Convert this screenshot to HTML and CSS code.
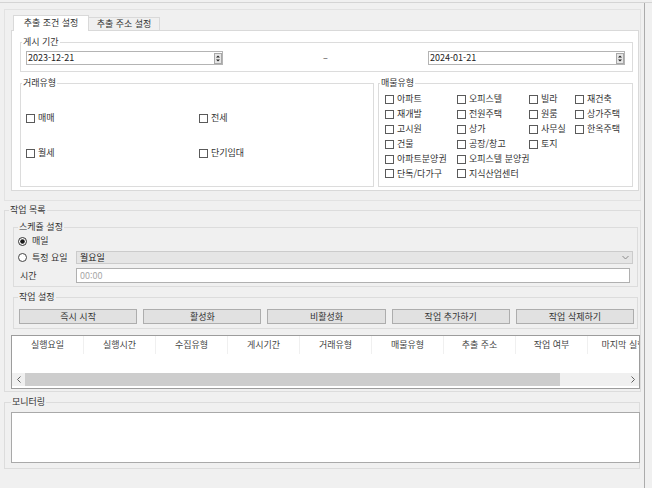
FILE: index.html
```html
<!DOCTYPE html>
<html lang="ko">
<head>
<meta charset="utf-8">
<title>작업 설정</title>
<link rel="stylesheet" href="styles.css">
</head>
<body>
<div class="app">
  <div class="main">
    <div class="tabhost">
      <div class="tabs">
        <div class="tab active">추출 조건 설정</div>
        <div class="tab">추출 주소 설정</div>
      </div>
      <div class="tabpage">
        <fieldset class="grp period">
          <legend>게시 기간</legend>
          <div class="daterow">
            <div class="datepick"><span>2023-12-21</span><svg class="spin" width="8" height="11" viewBox="0 0 8 11"><rect x="0.5" y="0.5" width="7" height="10" fill="#e6e6e6" stroke="#a8a8a8"/><path d="M2 4.6h4L4 2.4z M2 6.4h4L4 8.6z" fill="#222"/></svg></div>
            <span class="dash">–</span>
            <div class="datepick"><span>2024-01-21</span><svg class="spin" width="8" height="11" viewBox="0 0 8 11"><rect x="0.5" y="0.5" width="7" height="10" fill="#e6e6e6" stroke="#a8a8a8"/><path d="M2 4.6h4L4 2.4z M2 6.4h4L4 8.6z" fill="#222"/></svg></div>
          </div>
        </fieldset>
        <div class="typerow">
          <fieldset class="grp deal">
            <legend>거래유형</legend>
            <div class="dealgrid">
              <label class="chk"><span class="box"></span>매매</label>
              <label class="chk"><span class="box"></span>전세</label>
              <label class="chk"><span class="box"></span>월세</label>
              <label class="chk"><span class="box"></span>단기임대</label>
            </div>
          </fieldset>
          <fieldset class="grp prop">
            <legend>매물유형</legend>
            <div class="propgrid">
              <label class="chk"><span class="box"></span>아파트</label>
              <label class="chk"><span class="box"></span>오피스텔</label>
              <label class="chk"><span class="box"></span>빌라</label>
              <label class="chk"><span class="box"></span>재건축</label>
              <label class="chk"><span class="box"></span>재개발</label>
              <label class="chk"><span class="box"></span>전원주택</label>
              <label class="chk"><span class="box"></span>원룸</label>
              <label class="chk"><span class="box"></span>상가주택</label>
              <label class="chk"><span class="box"></span>고시원</label>
              <label class="chk"><span class="box"></span>상가</label>
              <label class="chk"><span class="box"></span>사무실</label>
              <label class="chk"><span class="box"></span>한옥주택</label>
              <label class="chk"><span class="box"></span>건물</label>
              <label class="chk"><span class="box"></span>공장/창고</label>
              <label class="chk"><span class="box"></span>토지</label>
              <span></span>
              <label class="chk"><span class="box"></span>아파트분양권</label>
              <label class="chk span3"><span class="box"></span>오피스텔 분양권</label>
              <label class="chk"><span class="box"></span>단독/다가구</label>
              <label class="chk span3"><span class="box"></span>지식산업센터</label>
            </div>
          </fieldset>
        </div>
      </div>
    </div>

    <fieldset class="grp jobs">
      <legend>작업 목록</legend>
      <fieldset class="grp sched">
        <legend>스케쥴 설정</legend>
        <div class="schedgrid">
          <label class="radio full"><svg width="9" height="9" viewBox="0 0 9 9"><circle cx="4.5" cy="4.5" r="4" fill="#fff" stroke="#333"/><circle cx="4.5" cy="4.5" r="2.3" fill="#1a1a1a"/></svg>매일</label>
          <label class="radio"><svg width="9" height="9" viewBox="0 0 9 9"><circle cx="4.5" cy="4.5" r="4" fill="#fff" stroke="#444"/></svg>특정 요일</label>
          <div class="combo"><span>월요일</span><svg width="7" height="5" viewBox="0 0 7 5"><path d="M0.5 1l3 3 3-3" fill="none" stroke="#8a8a8a"/></svg></div>
          <span class="lbl">시간</span>
          <div class="textbox"><span class="ph">00:00</span></div>
        </div>
      </fieldset>
      <fieldset class="grp jobset">
        <legend>작업 설정</legend>
        <div class="btnrow">
          <button class="btn">즉시 시작</button>
          <button class="btn">활성화</button>
          <button class="btn">비활성화</button>
          <button class="btn">작업 추가하기</button>
          <button class="btn">작업 삭제하기</button>
        </div>
      </fieldset>
      <div class="list">
        <div class="lhead">
          <span class="col">실행요일</span>
          <span class="col">실행시간</span>
          <span class="col">수집유형</span>
          <span class="col">게시기간</span>
          <span class="col">거래유형</span>
          <span class="col">매물유형</span>
          <span class="col">추출 주소</span>
          <span class="col">작업 여부</span>
          <span class="col">마지막 실행</span>
        </div>
        <div class="lbody"></div>
        <div class="hscroll">
          <span class="arrow"><svg width="4" height="7" viewBox="0 0 4 7"><path d="M3.5 0.5l-3 3 3 3" fill="none" stroke="#606060"/></svg></span>
          <span class="track"><span class="thumb"></span></span>
          <span class="arrow"><svg width="4" height="7" viewBox="0 0 4 7"><path d="M0.5 0.5l3 3-3 3" fill="none" stroke="#606060"/></svg></span>
        </div>
      </div>
    </fieldset>

    <fieldset class="grp monitor">
      <legend>모니터링</legend>
      <div class="monbox"></div>
    </fieldset>
  </div>
  <div class="side"></div>
</div>
</body>
</html>
```
FILE: styles.css
```css
* { box-sizing: border-box; }
html, body { margin: 0; padding: 0; }
body {
  background: #f0f0f0;
  font-family: "Noto Sans CJK KR", "Noto Sans", sans-serif;
  font-size: 9px;
  line-height: 12px;
  color: #333;
  width: 652px;
  height: 488px;
  overflow: hidden;
}
.app {
  margin-top: 2px;
  border-top: 1px solid #d4d4d4;
  display: flex;
  height: 486px;
}
.main {
  width: 645px;
  flex: none;
  border-right: 1px solid #ababab;
}
.side { flex: 1; }

/* tab control */
.tabhost {
  margin: 6px 3px 0 4px;
  height: 192px;
  border: 1px solid #e2e2e2;
  padding: 5px 1px 0 6px;
}
.tabs {
  display: flex;
  align-items: flex-end;
  height: 15px;
  margin-left: 2px;
  position: relative;
  z-index: 1;
}
.tab {
  height: 13px;
  width: 72px;
  margin-left: -1px;
  border: 1px solid #d9d9d9;
  border-bottom: none;
  background: #f0f0f0;
  text-align: center;
  line-height: 11px;
  white-space: nowrap;
}
.tab.active {
  width: 76px;
  height: 16px;
  margin-left: 0;
  margin-bottom: -1px;
  padding-top: 1px;
  line-height: 12px;
  background: #fff;
}
.tabpage {
  background: #fff;
  border: 1px solid #d9d9d9;
  height: 161px;
  padding: 1px 5px 0 8px;
}

/* group boxes */
.grp {
  margin: 0;
  padding: 0;
  min-width: 0;
  border: 1px solid #dcdcdc;
}
.grp > legend {
  padding: 0 1px;
  margin-left: 1px;
  line-height: 12px;
  white-space: nowrap;
}

/* period */
.period { margin-top: 4px; }
.daterow {
  display: flex;
  justify-content: space-between;
  align-items: center;
  padding: 3px 7px 6px 5px;
}
.datepick {
  width: 197px;
  height: 14px;
  border: 1px solid #b4b4b4;
  background: #fff;
  display: flex;
  align-items: center;
  justify-content: space-between;
  padding-left: 1px;
  color: #222;
}
.spin { display: block; }
.dash { color: #444; }

/* type groups */
.typerow {
  display: flex;
  gap: 4px;
  margin-top: 5px;
}
.deal { width: 354px; height: 110px; flex: none; }
.prop { flex: 1; height: 110px; }
.dealgrid {
  display: grid;
  grid-template-columns: 173px 1fr;
  row-gap: 23px;
  padding: 23px 0 0 5px;
}
.propgrid {
  display: grid;
  grid-template-columns: 72px 72px 46px 1fr;
  grid-auto-rows: 14.9px;
  padding: 3px 0 0 6px;
}
.chk {
  display: flex;
  align-items: center;
  gap: 3px;
  height: 12px;
  white-space: nowrap;
}
.propgrid .chk { align-self: center; }
.span3 { grid-column: span 3; }
.box {
  width: 9px;
  height: 9px;
  border: 1px solid #5a5a5a;
  background: #fff;
  flex: none;
}

/* jobs */
.jobs { margin: 3px 3px 0 4px; }
.jobs > legend { margin-left: 4px; }
.sched { margin: 5px 2px 0 8px; }
.sched > legend, .jobset > legend { margin-left: 4px; }
.schedgrid {
  display: grid;
  grid-template-columns: 58px 1fr;
  grid-template-rows: 12px 13px 15px;
  row-gap: 4px;
  align-items: center;
  padding: 2px 0 3px 4px;
}
.radio {
  display: flex;
  align-items: center;
  gap: 5px;
  white-space: nowrap;
}
.radio svg { display: block; flex: none; }
.full { grid-column: 1 / 3; }
.lbl { padding-left: 2px; }
.combo {
  width: 557px;
  height: 13px;
  background: #e5e5e5;
  border: 1px solid #cbcbcb;
  display: flex;
  align-items: center;
  justify-content: space-between;
  padding: 0 3px 0 3px;
  color: #222;
}
.combo svg { display: block; }
.textbox {
  width: 554px;
  height: 15px;
  background: #fff;
  border: 1px solid #b0b0b0;
  padding-left: 3px;
  display: flex;
  align-items: center;
}
.ph { color: #a8a8a8; }

.jobset { margin: 4px 2px 0 8px; }
.btnrow {
  display: flex;
  gap: 6px;
  padding: 6px 3px 4px 5px;
}
.btn {
  flex: 1;
  height: 15px;
  margin: 0;
  padding: 0;
  font: inherit;
  line-height: 13px;
  color: #333;
  background: #e1e1e1;
  border: 1px solid #adadad;
  border-radius: 0;
}

.list {
  margin: 6px 0 2px 6px;
  width: 629px;
  height: 54px;
  background: #fff;
  border: 1px solid #9c9c9c;
  display: flex;
  flex-direction: column;
  padding-bottom: 2px;
}
.lhead {
  display: flex;
  height: 18px;
  overflow: hidden;
  flex: none;
}
.col {
  flex: none;
  width: 72px;
  text-align: center;
  line-height: 18px;
  white-space: nowrap;
  border-right: 1px solid #f0f0f0;
  color: #444;
}
.lbody { flex: 1; }
.hscroll {
  height: 13px;
  flex: none;
  display: flex;
  background: #f0f0f0;
}
.arrow {
  width: 13px;
  flex: none;
  display: flex;
  align-items: center;
  justify-content: center;
}
.arrow svg { display: block; }
.track { flex: 1; display: flex; }
.thumb {
  width: 535px;
  background: #cdcdcd;
}

/* monitor */
.monitor { margin: 4px 4px 0 4px; }
.monitor > legend { margin-left: 6px; }
.monbox {
  margin: 4px 0 5px 6px;
  width: 629px;
  height: 51px;
  background: #fff;
  border: 1px solid #a9a9a9;
}
```
